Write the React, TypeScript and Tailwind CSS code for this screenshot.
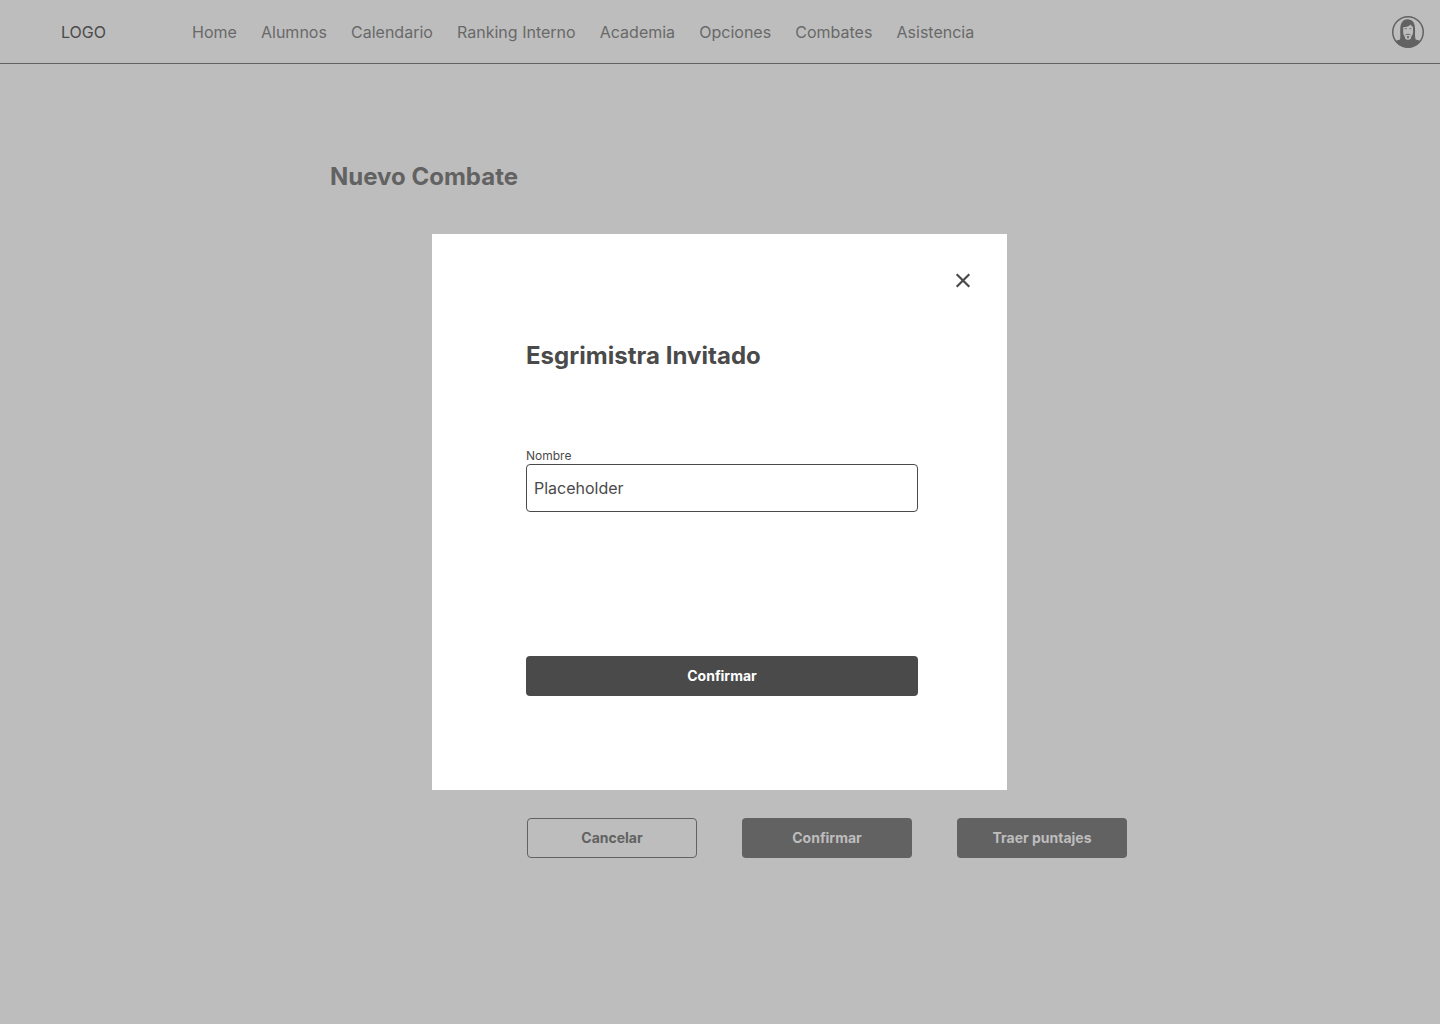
const links = ["Home", "Alumnos", "Calendario", "Ranking Interno", "Academia", "Opciones", "Combates", "Asistencia"];

function Avatar() {
  return (
    <svg width="32" height="32" viewBox="0 0 32 32" fill="none">
      <circle cx="16" cy="16" r="15.25" stroke="#626262" strokeWidth="1.5" />
      {/* shoulders */}
      <path d="M3.500 25.200C6 23.500 8.500 24 11.500 22.800h9c2.500 1.200 5.500.9 8 2.400C26 29 21.500 31.500 16 31.500S6 29 3.500 25.200Z" fill="#626262" />
      {/* hair */}
      <path d="M7.800 24.300C9 21 7.800 17 8.300 12 8.700 6.500 11.500 3.300 15.500 3.300c1 0 1.500.3 2 .5 3.500.3 5.200 3.700 5.500 8.200.3 5-.5 9 .9 12.300Z" fill="#626262" />
      {/* face and neck */}
      <path d="M11.200 11.300c3.300-.2 6.300-1 7.600-2.700.3 1.200.9 1.900 2.200 2.400v5c0 1.900-.9 3.700-2 4.900v1.300c-.8 1.200-1.900 1.600-3 1.600s-2.200-.4-3-1.600v-1.300c-1.100-1.200-1.800-3-1.800-4.900Z" fill="#bdbdbd" />
      <path d="M12.600 12.700h2.200M17.300 12.700h2.200" stroke="#626262" strokeWidth=".8" />
      <path d="M13.500 19c.8-1 4.200-1 5 0" stroke="#626262" strokeWidth="1" />
      <path d="M14.900 20.200h2.200l-.3 2h-1.600Z" fill="#626262" />
    </svg>
  );
}

export default function App() {
  return (
    <div className="relative h-[1024px] w-[1440px] overflow-hidden bg-[#bdbdbd] font-['Inter',sans-serif] text-[#626262]">
      <header className="flex h-16 items-center border-b border-[#626262] pr-4 pl-[61px]">
        <span className="w-[131px] text-[#4a4a4a]">LOGO</span>
        <nav className="flex flex-1 gap-[24.16px] text-[#696969]">
          {links.map((l) => <a key={l}>{l}</a>)}
        </nav>
        <Avatar />
      </header>
      <main className="pt-[97px] pl-[330px]">
        <h1 className="text-2xl leading-8 font-bold">Nuevo Combate</h1>
        <div className="mt-[625px] ml-[197px] flex gap-[45px] text-sm font-bold">
          <button className="h-10 w-[170px] rounded border border-[#626262]">Cancelar</button>
          <button className="h-10 w-[170px] rounded bg-[#626262] text-[#bdbdbd]">Confirmar</button>
          <button className="h-10 w-[170px] rounded bg-[#626262] text-[#bdbdbd]">Traer puntajes</button>
        </div>
      </main>
      <section role="dialog" className="absolute top-[234px] left-[432px] flex h-[556px] w-[575px] flex-col bg-white pr-[89px] pl-[94px] text-[#4a4a4a]">
        <button aria-label="Cerrar" className="mt-[39px] -mr-[53px] self-end">
          <svg width="16" height="16" viewBox="0 0 16 16" fill="none" stroke="#4a4a4a" strokeWidth="2.2">
            <path d="M1.700 1.200 14.300 13.800M14.300 1.200 1.700 13.800" />
          </svg>
        </button>
        <h2 className="mt-[51px] text-2xl leading-8 font-bold tracking-[0.03px]">Esgrimistra Invitado</h2>
        <label className="mt-[76px] flex flex-col text-xs leading-4">
          Nombre
          <input placeholder="Placeholder" className="h-12 rounded border border-[#4a4a4a] px-[7px] text-base placeholder:text-[#4a4a4a]" />
        </label>
        <button className="mt-36 h-10 rounded bg-[#4a4a4a] text-sm font-bold text-white">Confirmar</button>
      </section>
    </div>
  );
}
